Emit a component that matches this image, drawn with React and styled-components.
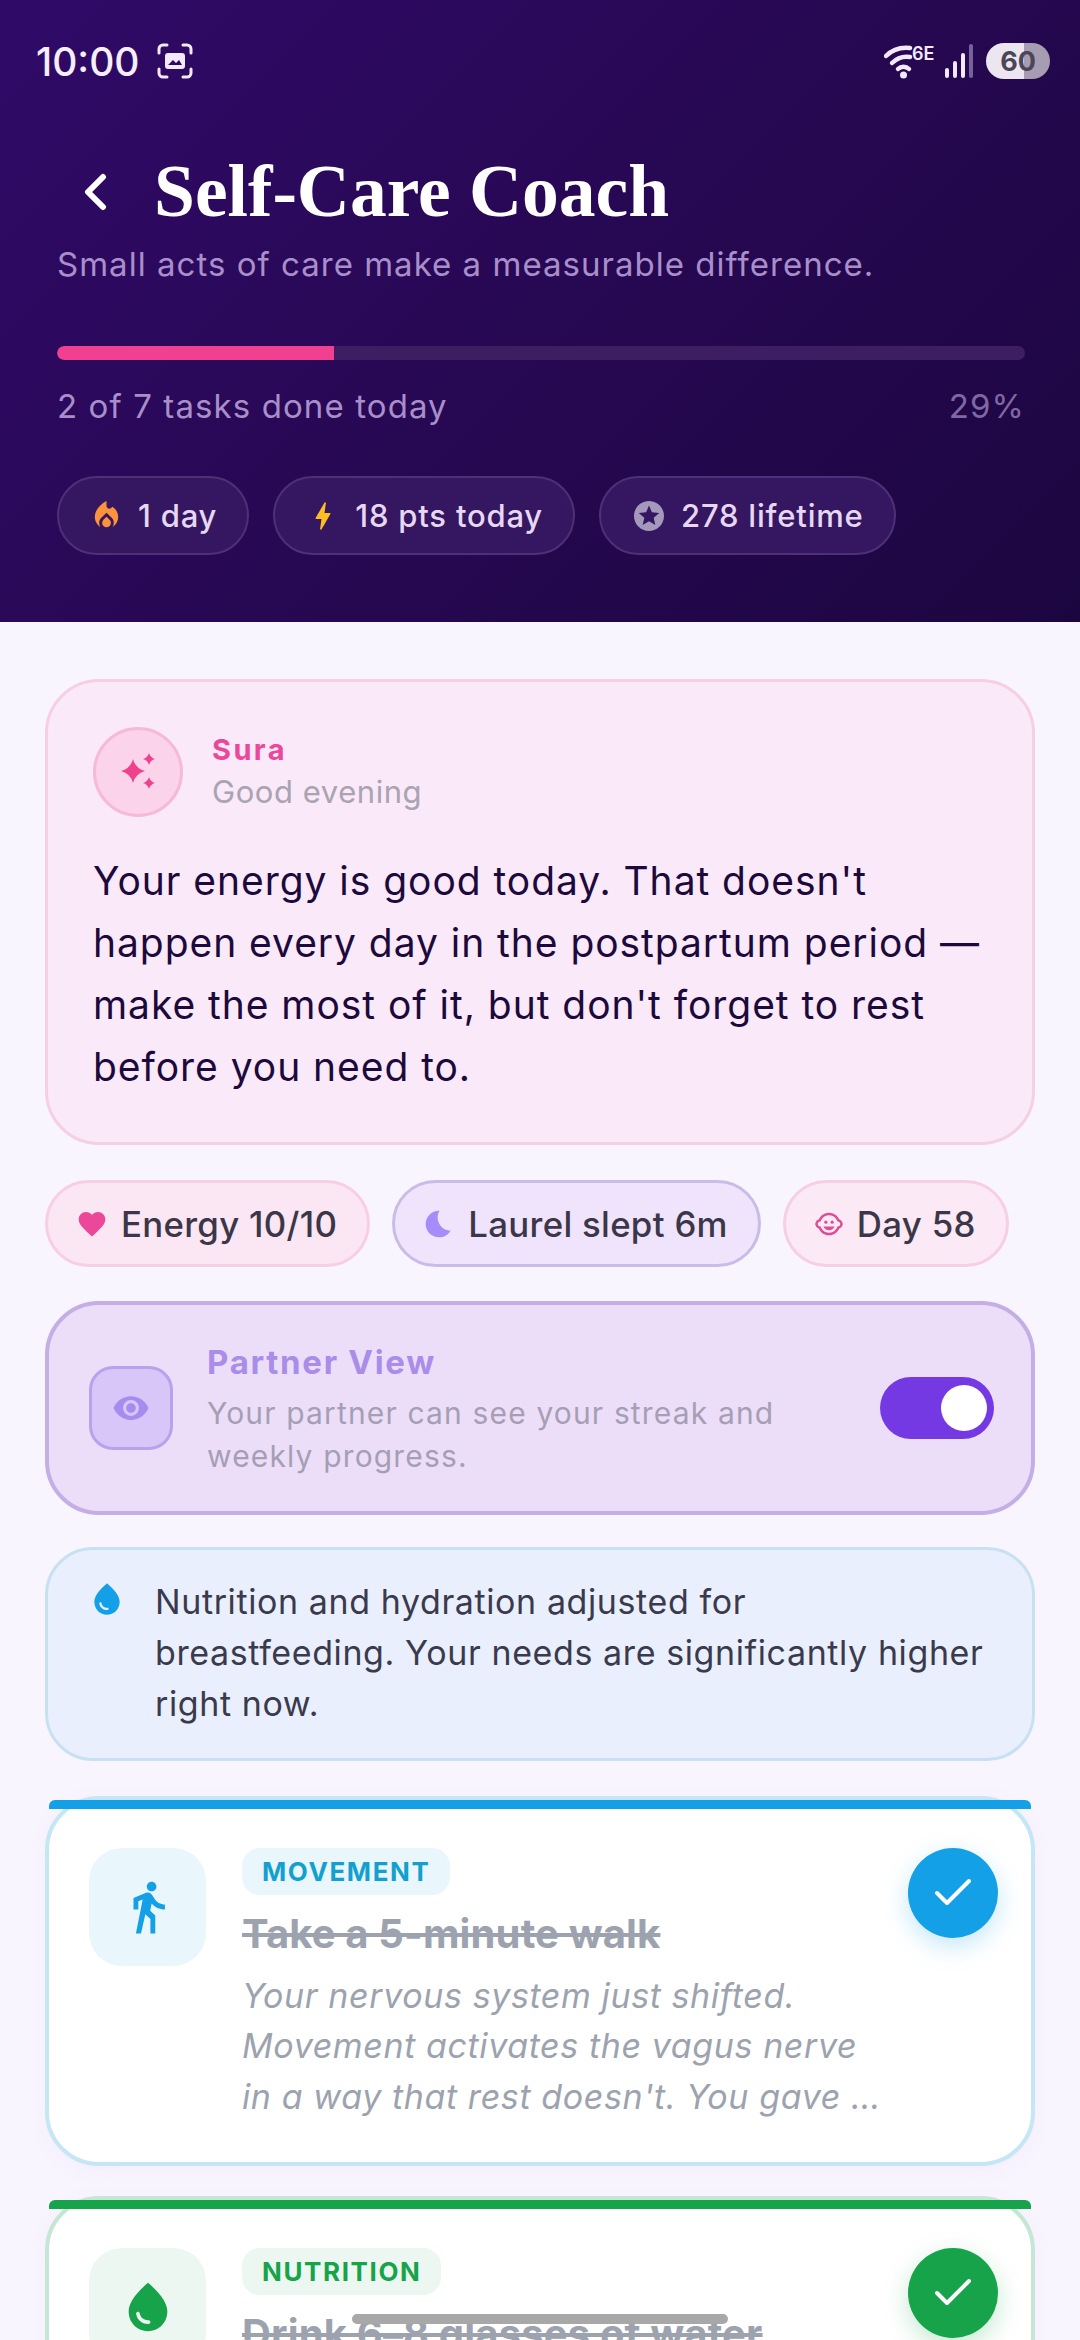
import React from "react";
import styled, { createGlobalStyle } from "styled-components";
import { Check } from "lucide-react";
import {
  MdLocalFireDepartment,
  MdBolt,
  MdStars,
  MdFavorite,
  MdBedtime,
  MdOutlineChildCare,
  MdVisibility,
  MdWaterDrop,
  MdDirectionsWalk,
} from "react-icons/md";

const GlobalStyle = createGlobalStyle`
  html, body {
    margin: 0;
    padding: 0;
    background: #f9f5ff;
    font-family: "Inter", "Noto Sans", sans-serif;
  }
  * { box-sizing: border-box; }
`;

const Screen = styled.div`
  position: relative;
  width: 1080px;
  height: 2340px;
  overflow: hidden;
  background: #f9f5ff;
`;

const Hero = styled.header`
  height: 622px;
  padding: 0 51px 0 57px;
  background: linear-gradient(135deg, #300a68 0%, #270853 50%, #1c0640 100%);
`;

const StatusBar = styled.div`
  height: 122px;
  margin: 0 -21px 0 -21px;
  display: flex;
  align-items: center;
  justify-content: space-between;
`;

const StatusLeft = styled.div`
  display: flex;
  align-items: center;
  gap: 17px;
`;

const Clock = styled.span`
  color: #f6eefc;
  font-size: 39px;
  font-weight: 500;
`;

const StatusRight = styled.div`
  display: flex;
  align-items: center;
  gap: 8px;
`;

const Battery = styled.div`
  width: 64px;
  height: 36px;
  border-radius: 18px;
  display: flex;
  align-items: center;
  justify-content: center;
  color: #4c4656;
  font-size: 27px;
  font-weight: 700;
  background: linear-gradient(90deg, #ece6f0 0 60%, #a79db3 60% 100%);
`;

const TitleRow = styled.div`
  display: flex;
  align-items: center;
  gap: 46px;
  height: 90px;
  margin-top: 25px;
  padding-left: 25px;
  color: #fff;
`;

const Title = styled.h1`
  margin: 0;
  color: #fff;
  font-family: "Liberation Serif", serif;
  font-size: 73.5px;
  font-weight: 700;
  line-height: 90px;
`;

const Subtitle = styled.p`
  margin: 5px 0 0;
  color: #a98fca;
  font-size: 33px;
  line-height: 44px;
  letter-spacing: 1.02px;
`;

const Track = styled.div`
  height: 14px;
  margin: 60px 4px 0 0;
  border-radius: 7px;
  overflow: hidden;
  background: #3d1e63;
`;

const Fill = styled.div`
  height: 100%;
  border-radius: 7px 0 0 7px;
  background: #f0408f;
`;

const ProgressLabels = styled.div`
  display: flex;
  justify-content: space-between;
  margin: 24px 4px 0 0;
  color: #a98fca;
  font-size: 33px;
  line-height: 44px;
  letter-spacing: 1.1px;
`;

const Percent = styled.span`
  color: #8068a3;
`;

const ChipRow = styled.div`
  display: flex;
  gap: 24px;
  margin-top: 48px;
`;

const Chip = styled.div`
  height: 79px;
  padding: 0 30px;
  display: flex;
  align-items: center;
  gap: 14px;
  border-radius: 40px;
  border: 2px solid #4d3076;
  background: #351660;
  color: #e6d8f2;
  font-size: 31px;
  font-weight: 500;
  letter-spacing: 0.8px;
`;

const Content = styled.main`
  padding: 57px 45px 0;
  display: flex;
  flex-direction: column;
`;

const CoachCard = styled.section`
  height: 466px;
  padding: 45px 45px 0;
  border: 3px solid #f5cfe6;
  border-radius: 54px;
  background: #fae9f9;
`;

const CoachHead = styled.div`
  display: flex;
  align-items: center;
  gap: 29px;
`;

const Avatar = styled.div`
  width: 90px;
  height: 90px;
  border-radius: 50%;
  display: flex;
  align-items: center;
  justify-content: center;
  border: 3px solid #f6b9d9;
  background: #fbd3ea;
`;

const CoachName = styled.div`
  color: #ec4899;
  font-size: 29px;
  font-weight: 700;
  line-height: 40px;
  letter-spacing: 2.4px;
`;

const Greeting = styled.div`
  color: #a9a3b2;
  font-size: 31px;
  line-height: 44px;
  letter-spacing: 0.55px;
`;

const CoachText = styled.p`
  margin: 33px 0 0;
  color: #1d0a3c;
  font-size: 39px;
  line-height: 62px;
  letter-spacing: 0.95px;
`;

const PillRow = styled.div`
  display: flex;
  gap: 22px;
  margin-top: 35px;
`;

const Pill = styled.div`
  height: 87px;
  padding: 0 30px 0 28px;
  display: flex;
  align-items: center;
  gap: 13px;
  border-radius: 44px;
  border: 3px solid ${(p) => p.$border};
  background: ${(p) => p.$bg};
  color: #3b3648;
  font-size: 34.8px;
  font-weight: 500;
  letter-spacing: 0.3px;
`;

const PartnerCard = styled.section`
  height: 214px;
  margin-top: 34px;
  padding: 0 37px 0 40px;
  display: flex;
  align-items: center;
  border: 4px solid #c3aee6;
  border-radius: 54px;
  background: #ecdef9;
`;

const PartnerIcon = styled.div`
  width: 84px;
  height: 84px;
  flex: none;
  display: flex;
  align-items: center;
  justify-content: center;
  border-radius: 24px;
  border: 3px solid #b8a2ee;
  background: #d8c6f8;
  color: #a78bee;
`;

const PartnerBody = styled.div`
  flex: 1;
  margin-left: 34px;
  padding-top: 2px;
`;

const PartnerTitle = styled.div`
  color: #a98de8;
  font-size: 33px;
  font-weight: 700;
  line-height: 44px;
  letter-spacing: 1.7px;
`;

const PartnerText = styled.div`
  margin-top: 8px;
  width: 600px;
  color: #a69eb5;
  font-size: 30px;
  line-height: 43px;
  letter-spacing: 1.15px;
`;

const Toggle = styled.div`
  width: 114px;
  height: 62px;
  flex: none;
  display: flex;
  align-items: center;
  justify-content: flex-end;
  padding-right: 7px;
  border-radius: 31px;
  background: #7539e4;
`;

const Knob = styled.div`
  width: 46px;
  height: 46px;
  border-radius: 50%;
  background: #fff;
`;

const InfoCard = styled.section`
  height: 214px;
  margin-top: 32px;
  padding: 26px 45px 0 40px;
  display: flex;
  gap: 27px;
  border: 3px solid #c8e1f2;
  border-radius: 48px;
  background: #e9effd;
`;

const InfoIcon = styled.div`
  flex: none;
  width: 40px;
  margin-top: 4px;
  color: #14a0e6;
`;

const InfoText = styled.p`
  margin: 0;
  color: #3b3a4d;
  font-size: 34px;
  line-height: 51px;
  letter-spacing: 0.6px;
`;

const TaskCard = styled.article`
  position: relative;
  height: ${(p) => p.$height}px;
  margin-top: ${(p) => p.$gap}px;
  padding: 48px 33px 0 40px;
  display: flex;
  border: 4px solid ${(p) => p.$border};
  border-radius: 54px;
  background: #fff;
  box-shadow: 0 4px 20px rgba(120, 90, 200, 0.05);

  &::before {
    content: "";
    position: absolute;
    top: 0;
    left: 0;
    right: 0;
    height: 9px;
    border-radius: 6px 6px 0 0;
    background: ${(p) => p.$accent};
  }
`;

const TaskIcon = styled.div`
  width: 117px;
  height: 118px;
  flex: none;
  display: flex;
  align-items: center;
  justify-content: center;
  border-radius: 33px;
  background: ${(p) => p.$bg};
  color: ${(p) => p.$color};
`;

const TaskBody = styled.div`
  flex: 1;
  min-width: 0;
  margin-left: 36px;
`;

const Badge = styled.span`
  display: inline-block;
  height: 47px;
  padding: 0 20px;
  border-radius: 18px;
  background: ${(p) => p.$bg};
  color: ${(p) => p.$color};
  font-size: 26px;
  font-weight: 700;
  line-height: 47px;
  letter-spacing: 1.6px;
`;

const TaskTitle = styled.div`
  margin-top: 14px;
  color: #9ca3af;
  font-size: 40px;
  font-weight: 700;
  line-height: 50px;
  letter-spacing: 0.15px;
  text-decoration: line-through;
  white-space: nowrap;
`;

const TaskText = styled.p`
  margin: 12px 0 0;
  width: 640px;
  color: #9ca3af;
  font-size: 34px;
  font-style: italic;
  line-height: 50.4px;
  letter-spacing: 0.6px;
`;

const CheckButton = styled.div`
  width: 90px;
  height: 90px;
  flex: none;
  display: flex;
  align-items: center;
  justify-content: center;
  border-radius: 50%;
  background: ${(p) => p.$color};
  color: #fff;
  box-shadow: 0 8px 24px ${(p) => p.$shadow};
`;

const GestureBar = styled.div`
  position: absolute;
  left: 352px;
  bottom: 16px;
  width: 376px;
  height: 10px;
  border-radius: 5px;
  background: #a8a8a8;
`;

const BackIcon = () => (
  <svg width="26" height="38" viewBox="0 0 26 38" fill="none">
    <path d="M21 4L6 19l15 15" stroke="#fff" strokeWidth="6" strokeLinecap="round" strokeLinejoin="round" />
  </svg>
);

const CaptureIcon = () => (
  <svg width="36" height="36" viewBox="0 0 36 36" fill="none">
    <path
      d="M2 10V6a4 4 0 0 1 4-4h4M26 2h4a4 4 0 0 1 4 4v4M34 26v4a4 4 0 0 1-4 4h-4M10 34H6a4 4 0 0 1-4-4v-4"
      stroke="#f3e9fa"
      strokeWidth="3"
      strokeLinecap="round"
    />
    <rect x="8" y="10" width="20" height="16" rx="3" fill="#f3e9fa" />
    <path d="M11 22l5-5 3 3 3-3 3 5z" fill="#2c0a60" />
  </svg>
);

const WifiIcon = () => (
  <svg width="52" height="36" viewBox="0 0 52 36" fill="none">
    <g stroke="#f3e9fa" strokeWidth="4.500" strokeLinecap="round">
      <path d="M2 13C9 6 17 4 26 5" />
      <path d="M8 20C14 14 20 13 26 14" />
      <path d="M14 26c3-3 8-3 11 0" />
    </g>
    <circle cx="19.5" cy="32" r="3.500" fill="#f3e9fa" />
    <text x="28" y="17" fill="#f3e9fa" fontSize="18" fontWeight="600" fontFamily="Inter, sans-serif">6E</text>
  </svg>
);

const SignalIcon = () => (
  <svg width="34" height="36" viewBox="0 0 34 36">
    <rect x="1" y="25" width="4" height="10" rx="2" fill="#f3e9fa" />
    <rect x="9" y="18" width="4" height="17" rx="2" fill="#f3e9fa" />
    <rect x="17" y="10" width="4" height="25" rx="2" fill="#f3e9fa" />
    <rect x="25" y="1" width="4" height="34" rx="2" fill="#76619a" />
  </svg>
);

const SparkleIcon = () => (
  <svg width="40" height="40" viewBox="0 0 40 40" fill="#f0418f">
    <path d="M15 7Q17.500 16.500 27 19 17.500 21.500 15 31 12.500 21.500 3 19 12.500 16.500 15 7z" />
    <path d="M31 1Q32.300 5.700 37 7 32.300 8.300 31 13 29.700 8.300 25 7 29.700 5.700 31 1z" />
    <path d="M31 25Q32.300 29.700 37 31 32.300 32.300 31 37 29.700 32.300 25 31 29.700 29.700 31 25z" />
  </svg>
);

export default function App() {
  return (
    <Screen>
      <GlobalStyle />
      <Hero>
        <StatusBar>
          <StatusLeft>
            <Clock>10:00</Clock>
            <CaptureIcon />
          </StatusLeft>
          <StatusRight>
            <WifiIcon />
            <SignalIcon />
            <Battery>60</Battery>
          </StatusRight>
        </StatusBar>
        <TitleRow>
          <BackIcon />
          <Title>Self-Care Coach</Title>
        </TitleRow>
        <Subtitle>Small acts of care make a measurable difference.</Subtitle>
        <Track>
          <Fill style={{ width: `${(2 / 7) * 100}%` }} />
        </Track>
        <ProgressLabels>
          <span>2 of 7 tasks done today</span>
          <Percent>29%</Percent>
        </ProgressLabels>
        <ChipRow>
          <Chip>
            <MdLocalFireDepartment size={35} color="#fb923c" />
            1 day
          </Chip>
          <Chip>
            <MdBolt size={36} color="#fbbf24" />
            18 pts today
          </Chip>
          <Chip>
            <MdStars size={36} color="#a598bd" />
            278 lifetime
          </Chip>
        </ChipRow>
      </Hero>

      <Content>
        <CoachCard>
          <CoachHead>
            <Avatar>
              <SparkleIcon />
            </Avatar>
            <div>
              <CoachName>Sura</CoachName>
              <Greeting>Good evening</Greeting>
            </div>
          </CoachHead>
          <CoachText>
            Your energy is good today. That doesn't happen every day in the postpartum period — make the most of it, but don't forget to rest before you need to.
          </CoachText>
        </CoachCard>

        <PillRow>
          <Pill $bg="#fbe6f3" $border="#f6cfe5">
            <MdFavorite size={32} color="#ec4899" />
            Energy 10/10
          </Pill>
          <Pill $bg="#efe4fb" $border="#c9bce8">
            <MdBedtime size={32} color="#a78bfa" />
            Laurel slept 6m
          </Pill>
          <Pill $bg="#fbe9f6" $border="#f6cfe5">
            <MdOutlineChildCare size={30} color="#dd4d94" />
            Day 58
          </Pill>
        </PillRow>

        <PartnerCard>
          <PartnerIcon>
            <MdVisibility size={38} />
          </PartnerIcon>
          <PartnerBody>
            <PartnerTitle>Partner View</PartnerTitle>
            <PartnerText>Your partner can see your streak and weekly progress.</PartnerText>
          </PartnerBody>
          <Toggle>
            <Knob />
          </Toggle>
        </PartnerCard>

        <InfoCard>
          <InfoIcon>
            <MdWaterDrop size={38} />
          </InfoIcon>
          <InfoText>Nutrition and hydration adjusted for breastfeeding. Your needs are significantly higher right now.</InfoText>
        </InfoCard>

        <TaskCard $height={370} $gap={35} $border="#c5e6f5" $accent="#14a0e6">
          <TaskIcon $bg="#e9f6fc" $color="#14a0e6">
            <MdDirectionsWalk size={58} />
          </TaskIcon>
          <TaskBody>
            <Badge $bg="#e9f6fc" $color="#14a0cf">MOVEMENT</Badge>
            <TaskTitle>Take a 5-minute walk</TaskTitle>
            <TaskText>Your nervous system just shifted. Movement activates the vagus nerve in a way that rest doesn't. You gave …</TaskText>
          </TaskBody>
          <CheckButton $color="#14a0e6" $shadow="rgba(20,160,230,0.25)">
            <Check size={48} strokeWidth={2} />
          </CheckButton>
        </TaskCard>

        <TaskCard $height={370} $gap={30} $border="#c5e6d3" $accent="#16a34a">
          <TaskIcon $bg="#ebf7f0" $color="#16a34a">
            <MdWaterDrop size={58} />
          </TaskIcon>
          <TaskBody>
            <Badge $bg="#ebf7f0" $color="#16a34a">NUTRITION</Badge>
            <TaskTitle>Drink 6–8 glasses of water</TaskTitle>
          </TaskBody>
          <CheckButton $color="#16a34a" $shadow="rgba(22,163,74,0.25)">
            <Check size={48} strokeWidth={2} />
          </CheckButton>
        </TaskCard>
      </Content>
      <GestureBar />
    </Screen>
  );
}
